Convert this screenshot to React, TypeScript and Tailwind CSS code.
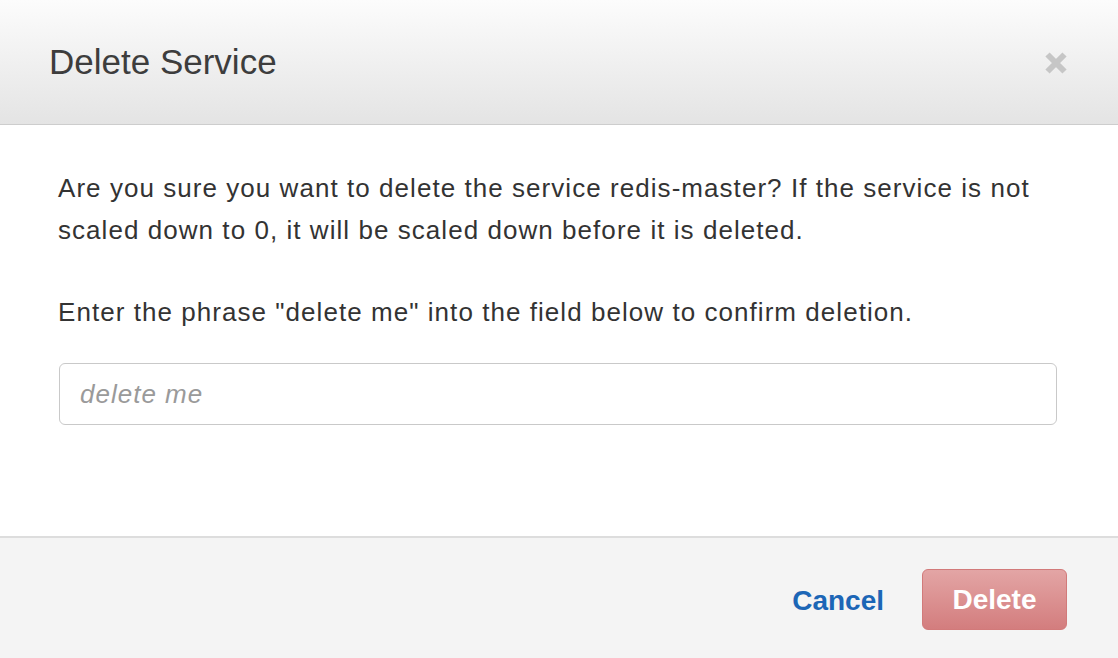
export default function App() {
	return (
		<div className="w-[1118px] h-[658px] flex flex-col bg-white font-['Liberation_Sans',Arial,sans-serif] text-[#333333]">
			<div className="h-[125px] shrink-0 flex items-center justify-between pl-[49px] pr-[51px] bg-gradient-to-b from-[#fcfcfc] to-[#e4e4e4] border-b border-[#cdcdcd]">
				<h1 className="text-[35px] leading-none text-[#3d3d3d] -mt-[2px]">Delete Service</h1>
				<button className="w-[22px] h-[22px] mt-[2px] text-[#c6c6c6]" aria-label="close">
					<svg viewBox="0 0 22 22" width="22" height="22">
						<path d="M2.5 2.5 L19.5 19.5 M19.5 2.5 L2.5 19.5" stroke="currentColor" strokeWidth="6" strokeLinecap="butt" />
					</svg>
				</button>
			</div>
			<div className="flex-1 pt-[42px] pl-[58px] pr-[61px]">
				<p className="text-[26px] tracking-[1.05px] leading-[42px]">
					Are you sure you want to delete the service redis-master? If the service is not scaled down to 0, it will be scaled down before it is deleted.
				</p>
				<p className="mt-[40px] text-[26px] tracking-[1.05px] leading-[42px]">
					Enter the phrase "delete me" into the field below to confirm deletion.
				</p>
				<input
					className="mt-[30px] ml-px w-[998px] h-[62px] px-[20px] rounded-[6px] border border-[#c9c9c9] text-[26px] tracking-[1px] placeholder:italic placeholder:text-[#9a9a9a] outline-none"
					placeholder="delete me"
				/>
			</div>
			<div className="h-[122px] shrink-0 bg-[#f4f4f4] border-t-2 border-[#dddddd] flex items-start justify-end pt-[31px] pr-[51px]">
				<button className="mt-[18px] mr-[38px] text-[28px] font-bold leading-none text-[#1c66b6]">Cancel</button>
				<button className="w-[145px] h-[61px] rounded-[6px] border border-[#d27a7a] bg-gradient-to-b from-[#e3a5a5] to-[#d37d7e] text-white text-[28px] font-bold">
					Delete
				</button>
			</div>
		</div>
	);
}
